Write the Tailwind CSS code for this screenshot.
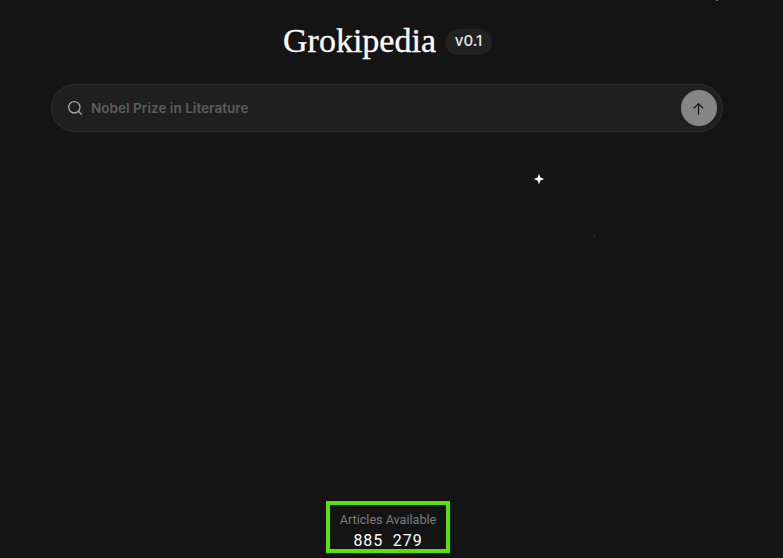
<!DOCTYPE html>
<html lang="en">
<head>
  <meta charset="UTF-8" />
  <meta name="viewport" content="width=device-width, initial-scale=1.0">
  <title>Grokipedia</title>
  <script src="https://cdn.jsdelivr.net/npm/@tailwindcss/browser@4"></script>
</head>
<body class="bg-[#141414] text-white font-['Inter',sans-serif]">
  <div class="relative h-[558px] w-full overflow-hidden flex flex-col items-center pr-[9px]">

    <!-- Stars -->
    <svg class="absolute left-[533px] top-[173px] w-[12px] h-[12px] text-white" viewBox="0 0 12 12" fill="currentColor">
      <path d="M6 0.8 7.4 4.6 11.2 6 7.4 7.4 6 11.2 4.6 7.4 0.8 6 4.6 4.6Z"></path>
    </svg>
    <div class="absolute left-[716px] top-0 w-[2px] h-[1px] bg-white/40"></div>
    <div class="absolute left-[594px] top-[235px] w-[1px] h-[1px] bg-white/25"></div>
    <div class="absolute left-[258px] top-[425px] w-[1px] h-[1px] bg-white/15"></div>

    <!-- Title -->
    <div class="flex items-center gap-[9px] h-[40px] mt-[21px] pl-[1px]">
      <h1 class="font-['Liberation_Serif',serif] text-[34px] leading-[40px] text-white [-webkit-text-stroke:0.3px_white]">Grokipedia</h1>
      <span class="flex items-center justify-center w-[47px] h-[26px] mt-[1px] rounded-full bg-[#212121] text-[15px] font-medium text-[#e4e4e4]">v0.1</span>
    </div>

    <!-- Search -->
    <div class="flex items-center w-[672px] h-[48px] mt-[23px] pl-[15px] pr-[5px] rounded-full border border-[#2e2e2e] bg-[#1f1f1f]">
      <svg class="w-[16px] h-[16px] text-[#a3a3a3] shrink-0" viewBox="0 0 24 24" fill="none" stroke="currentColor" stroke-width="2" stroke-linecap="round" stroke-linejoin="round">
        <circle cx="11" cy="11" r="8.5"></circle>
        <path d="m21.5 21.5-4.5-4.5"></path>
      </svg>
      <span class="ml-[8px] text-[13.6px] font-semibold text-[#5c5c5c]">Nobel Prize in Literature</span>
      <button class="ml-auto flex items-center justify-center w-[36px] h-[36px] rounded-full bg-[#858585]">
        <svg class="w-[13px] h-[13px] mr-[1px] text-[#141414]" viewBox="0 0 24 24" fill="none" stroke="currentColor" stroke-width="2.2" stroke-linecap="round" stroke-linejoin="round">
          <path d="M12 22V3"></path>
          <path d="m4 11 8-8 8 8"></path>
        </svg>
      </button>
    </div>

    <!-- Article count -->
    <div class="mt-auto mb-[5px] ml-[2px] flex flex-col items-center w-[124px] h-[52px] pt-[7px] border-[4px] border-[#58e10a] font-['Roboto',sans-serif]">
      <span class="text-[12.6px] leading-[16px] text-[#7d7d7d]">Articles Available</span>
      <span class="mt-[4px] text-[16px] leading-[18px] tracking-[0.9px] whitespace-pre text-white">885  279</span>
    </div>
  </div>
</body>
</html>
